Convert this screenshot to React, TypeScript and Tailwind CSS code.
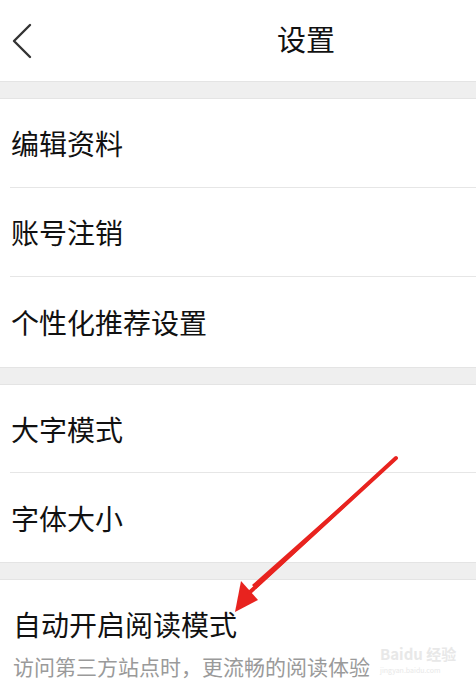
import React from "react";

const font = { fontFamily: '"Noto Sans CJK SC", "Noto Sans", sans-serif' };

const Band: React.FC = () => (
  <div className="h-[18px] bg-[#efefef] border-y border-[#e4e4e4]" />
);

const Row: React.FC<{ label: string; h: string; last?: boolean }> = ({
  label,
  h,
  last,
}) => (
  <div className={`${h} flex flex-col bg-white`}>
    <div className="flex-1 flex items-center pl-[11px] text-[28px] leading-none text-[#111]">
      {label}
    </div>
    {!last && <div className="ml-[10px] h-px bg-[#e6e6e6]" />}
  </div>
);

const App: React.FC = () => {
  return (
    <div className="relative w-[476px] h-[697px] overflow-hidden bg-white" style={font}>
      {/* Cabeçalho */}
      <div className="h-[81px] flex items-center relative">
        <svg className="ml-[11px]" width="22" height="36" viewBox="0 0 22 36">
          <path d="M19 2 L3 18 L19 34" fill="none" stroke="#333" strokeWidth="2.4" strokeLinecap="round" strokeLinejoin="round" />
        </svg>
        <div className="absolute left-[277px] top-[24px] text-[29px] leading-none text-[#111]">设置</div>
      </div>
      <Band />
      <Row label="编辑资料" h="h-[89px]" />
      <Row label="账号注销" h="h-[89px]" />
      <Row label="个性化推荐设置" h="h-[90px]" last />
      <Band />
      <Row label="大字模式" h="h-[88px]" />
      <Row label="字体大小" h="h-[89px]" last />
      <Band />
      <div className="pl-[13px] pt-[30px] flex flex-col items-start">
        <span className="text-[28px] leading-none text-[#111]">自动开启阅读模式</span>
        <span className="mt-[18px] text-[21px] leading-none text-[#9a9a9a]">
          访问第三方站点时，更流畅的阅读体验
        </span>
      </div>

      {/* marca d'água */}
      <div className="absolute left-[380px] top-[646px] flex flex-col items-start leading-none text-[#e8e8e8]">
        <span className="text-[15px] font-bold">Baidu 经验</span>
        <span className="text-[7px] mt-[6px]">jingyan.baidu.com</span>
      </div>

      {/* Seta vermelha */}
      <svg className="absolute left-0 top-0 pointer-events-none" width="476" height="697">
        <polygon points="396,457 397,459 256,589 252,585" fill="#e8231f" />
        <polygon points="235,612 241,581 258,600" fill="#e8231f" />
        <line x1="396" y1="458" x2="249" y2="593" stroke="#e8231f" strokeWidth="4" strokeLinecap="round" />
      </svg>
    </div>
  );
};

export default App;
